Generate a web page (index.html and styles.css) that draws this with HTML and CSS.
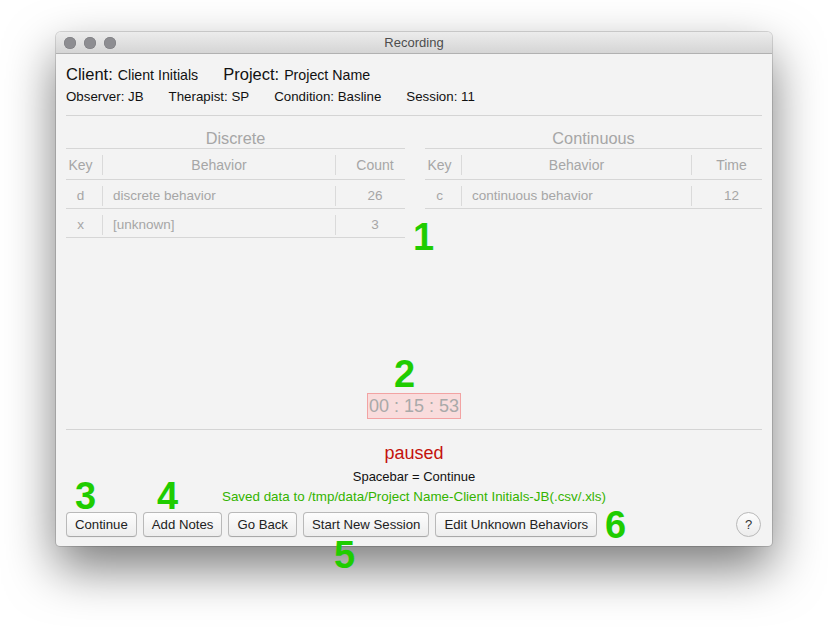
FILE: index.html
```html
<!DOCTYPE html>
<html>
<head>
<meta charset="utf-8">
<title>Recording</title>
<link rel="stylesheet" href="styles.css">
</head>
<body>
<div class="window">
  <div class="titlebar">
    <div class="lights"><span class="light"></span><span class="light"></span><span class="light"></span></div>
    <div class="title">Recording</div>
  </div>
  <div class="content">
    <div class="info-main">
      <span class="lbl">Client:</span><span class="val">Client Initials</span>
      <span class="lbl gap">Project:</span><span class="val">Project Name</span>
    </div>
    <div class="info-sub">
      <span>Observer: JB</span><span>Therapist: SP</span><span>Condition: Basline</span><span>Session: 11</span>
    </div>
    <div class="rule"></div>
    <div class="tables">
      <div class="table">
        <div class="table-title">Discrete</div>
        <div class="row head"><span class="c-key">Key</span><span class="c-beh center">Behavior</span><span class="c-num">Count</span></div>
        <div class="row"><span class="c-key">d</span><span class="c-beh">discrete behavior</span><span class="c-num">26</span></div>
        <div class="row"><span class="c-key">x</span><span class="c-beh">[unknown]</span><span class="c-num">3</span></div>
      </div>
      <div class="table">
        <div class="table-title">Continuous</div>
        <div class="row head"><span class="c-key">Key</span><span class="c-beh center">Behavior</span><span class="c-num">Time</span></div>
        <div class="row"><span class="c-key">c</span><span class="c-beh">continuous behavior</span><span class="c-num">12</span></div>
      </div>
    </div>
    <div class="timer-area">
      <div class="timer">00 : 15 : 53</div>
    </div>
    <div class="rule"></div>
    <div class="status">
      <div class="paused">paused</div>
      <div class="hint">Spacebar = Continue</div>
      <div class="saved">Saved data to /tmp/data/Project Name-Client Initials-JB(.csv/.xls)</div>
    </div>
    <div class="buttons">
      <button class="btn">Continue</button>
      <button class="btn">Add Notes</button>
      <button class="btn">Go Back</button>
      <button class="btn">Start New Session</button>
      <button class="btn">Edit Unknown Behaviors</button>
      <button class="help">?</button>
    </div>
  </div>
</div>
<div class="marks">
  <span class="mark m1">1</span>
  <span class="mark m2">2</span>
  <span class="mark m3">3</span>
  <span class="mark m4">4</span>
  <span class="mark m5">5</span>
  <span class="mark m6">6</span>
</div>
</body>
</html>
```
FILE: styles.css
```css
html, body {
  margin: 0;
  background: #ffffff;
}
body {
  position: relative;
  padding: 32px 0 0 56px;
  height: 627px;
  box-sizing: border-box;
  font-family: "Liberation Sans", Arial, sans-serif;
  color: #1a1a1a;
  overflow: hidden;
}
.window {
  width: 716px;
  height: 514px;
  background: #f3f3f3;
  border-radius: 5px 5px 4px 4px;
  box-shadow: 0 22px 50px rgba(0, 0, 0, 0.52), 0 0 0 1px rgba(0, 0, 0, 0.14);
  display: flex;
  flex-direction: column;
  overflow: hidden;
}
.titlebar {
  height: 21px;
  flex: none;
  background: linear-gradient(#ececec, #d5d5d5);
  border-bottom: 1px solid #b1b1b1;
  position: relative;
  display: flex;
  align-items: center;
  justify-content: center;
}
.lights {
  position: absolute;
  left: 8px;
  top: 5px;
  display: flex;
  gap: 8px;
}
.light {
  width: 12px;
  height: 12px;
  border-radius: 50%;
  background: #8d8d91;
  box-shadow: inset 0 0 0 0.5px #7a7a7e;
}
.title {
  font-size: 13px;
  color: #4d4d4d;
}
.content {
  flex: 1;
  display: flex;
  flex-direction: column;
  padding: 10px 10px 9px;
}
.info-main {
  height: 20px;
  line-height: 20px;
  display: flex;
  align-items: baseline;
}
.lbl {
  font-size: 16.5px;
  color: #111;
  margin-right: 5px;
}
.lbl.gap { margin-left: 25px; }
.val {
  font-size: 14.2px;
  color: #111;
}
.info-sub {
  margin-top: 4px;
  height: 18px;
  line-height: 18px;
  font-size: 13.3px;
  color: #111;
  display: flex;
  gap: 25px;
}
.rule {
  height: 1px;
  background: #d4d4d4;
  flex: none;
}
.info-sub + .rule { margin-top: 9px; }
.tables {
  margin-top: 12px;
  display: grid;
  grid-template-columns: 339px 337px;
  column-gap: 20px;
  align-items: start;
}
.table-title {
  text-align: center;
  font-size: 16.3px;
  line-height: 20px;
  height: 20px;
  color: #a6a6a6;
  border-bottom: 1px solid #d6d6d6;
}
.row {
  display: grid;
  grid-template-columns: 37px 1fr 69px;
  padding-top: 3px;
  box-sizing: border-box;
  height: 29px;
  align-items: center;
  border-bottom: 1px solid #d6d6d6;
  font-size: 13.5px;
  color: #a6a6a6;
}
.table + .table .row { grid-template-columns: 37px 1fr 70px; }
.row.head { height: 31px; padding-top: 2px; font-size: 14px; }
.row > span {
  line-height: 20px;
}
.c-key {
  text-align: center;
  border-right: 1px solid #dadada;
  padding-right: 7px;
}
.c-beh {
  padding-left: 10px;
  border-right: 1px solid #dadada;
}
.c-beh.center { text-align: center; padding-left: 0; }
.c-num { text-align: center; padding-left: 9px; }
.timer-area {
  flex: 1;
  display: flex;
  align-items: flex-end;
  justify-content: center;
  padding-bottom: 10px;
}
.timer {
  width: 92px;
  height: 24px;
  line-height: 24px;
  text-align: center;
  font-size: 18px;
  color: #a9a9a9;
  background: #f9dcdc;
  border: 1px solid #f2a3a3;
  white-space: pre;
}
.status {
  text-align: center;
  margin-top: 13px;
}
.paused {
  font-size: 18px;
  line-height: 20px;
  color: #c4120c;
}
.hint {
  margin-top: 5px;
  font-size: 13px;
  line-height: 18px;
  color: #111;
}
.saved {
  margin-top: 2px;
  font-size: 13.4px;
  line-height: 18px;
  color: #33b300;
}
.buttons {
  margin-top: 6px;
  display: flex;
  gap: 6px;
  align-items: center;
}
.btn {
  height: 25px;
  padding: 0 8px;
  font-family: "Liberation Sans", Arial, sans-serif;
  font-size: 13.2px;
  color: #222;
  background: linear-gradient(#fdfdfd, #ededed);
  border: 1px solid #b9b9b9;
  border-bottom-color: #a9a9a9;
  border-radius: 4px;
  box-shadow: 0 0.5px 0 rgba(0,0,0,0.05);
}
.help {
  margin-left: auto;
  margin-right: 1px;
  width: 25px;
  height: 25px;
  padding: 0;
  border-radius: 50%;
  font-family: "Liberation Sans", Arial, sans-serif;
  font-size: 13px;
  color: #333;
  background: linear-gradient(#fdfdfd, #ececec);
  border: 1px solid #b9b9b9;
}
.marks {
  position: absolute;
  left: 0;
  top: 0;
}
.mark {
  position: absolute;
  font-family: "Liberation Sans", Arial, sans-serif;
  font-weight: bold;
  font-size: 38px;
  line-height: 29px;
  color: #1fcc00;
}
.m1 { left: 413px; top: 223px; }
.m2 { left: 394px; top: 360px; }
.m3 { left: 75px; top: 482px; }
.m4 { left: 157px; top: 482px; }
.m5 { left: 334px; top: 541px; }
.m6 { left: 605px; top: 511px; }
```
